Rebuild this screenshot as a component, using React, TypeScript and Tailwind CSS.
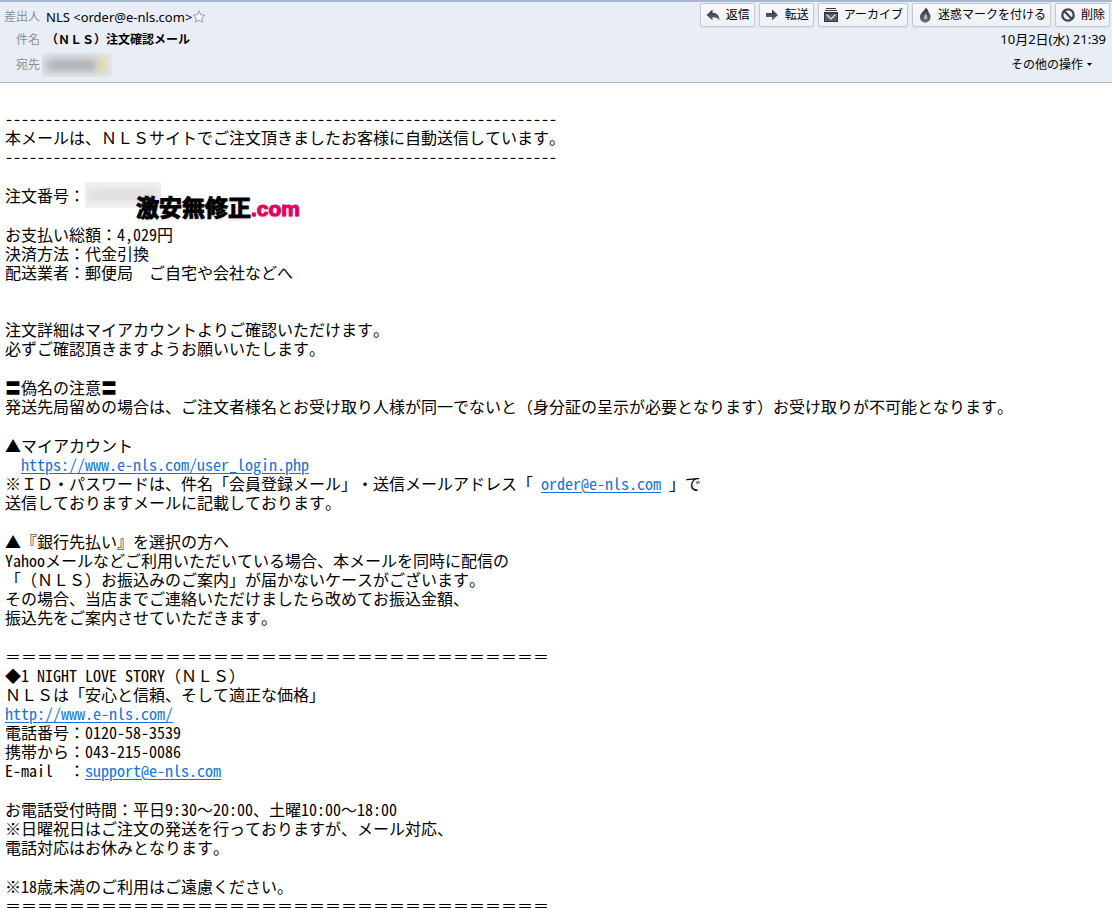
import React from "react";

const mailFont = "font-['Noto_Sans_Mono_CJK_JP','Noto_Sans_CJK_JP',monospace]";

const rule = "-".repeat(69);
const doubleRule = "＝".repeat(34);

interface ToolButtonProps {
  label: string;
  children: React.ReactNode;
}

function ToolButton({ label, children }: ToolButtonProps) {
  return (
    <button className="flex h-6 items-center gap-[5px] rounded-xs border border-[#c3cad4] bg-linear-to-b from-[#f8fafc] to-[#edf0f5] px-1 text-xs whitespace-nowrap shadow-xs">
      <svg viewBox="0 0 16 16" className="size-4 shrink-0" aria-hidden="true">
        <defs>
          <linearGradient id="ink" x1="0" y1="0" x2="0" y2="1">
            <stop offset="0" stopColor="#2f343a" />
            <stop offset="1" stopColor="#666c73" />
          </linearGradient>
        </defs>
        {children}
      </svg>
      {label}
    </button>
  );
}

function MailLink({ href, children }: { href: string; children: React.ReactNode }) {
  return (
    <a href={href} className="text-[#1373d9] underline underline-offset-2">
      {children}
    </a>
  );
}

function MailHeader() {
  return (
    <header className="flex justify-between border-t-2 border-b border-t-[#a9b7d1] border-b-[#a9b7d1] bg-[#e9edf5] pb-[3px] font-['Noto_Sans','Noto_Sans_CJK_JP',sans-serif] text-xs">
      <dl className="grid grid-cols-[36px_auto] content-start gap-x-[6px] pt-[3px] pl-1">
        <dt className="text-right leading-6 text-[#8b8f94]">差出人</dt>
        <dd className="flex items-center leading-6">
          <span className="text-[13px]">NLS &lt;order@e-nls.com&gt;</span>
          <svg viewBox="0 0 14 14" className="size-[14px]" fill="#f6f8fb" stroke="#9b9fa6" aria-hidden="true">
            <path d="M7 .8l1.700 4 4.300.4-3.300 2.800 1 4.300L7 10.100l-3.700 2.200 1-4.300L1 5.200l4.300-.4z" />
          </svg>
        </dd>
        <dt className="text-right leading-[22px] text-[#8b8f94]">件名</dt>
        <dd className="leading-[22px] font-bold">（ＮＬＳ）注文確認メール</dd>
        <dt className="text-right leading-7 text-[#8b8f94]">宛先</dt>
        <dd className="flex items-center">
          {/* Redacted recipient */}
          <span className="-ml-1 flex h-6 w-[70px] items-center overflow-hidden bg-[#e3e6eb] pl-1">
            <span className="h-3 w-[52px] bg-[#a9abae] blur-[5px]" />
            <span className="h-4 w-2 bg-[#e0d9a0] blur-[3px]" />
          </span>
        </dd>
      </dl>

      <div className="flex flex-col items-end pt-px pr-[2px]">
        <div className="flex gap-1">
          <ToolButton label="返信">
            <path d="M1.500 8l6-5.500v3.300c4.500.1 7 2.700 7 7.700-1.500-2.300-3.500-3.300-7-3.300v3.300z" fill="url(#ink)" />
          </ToolButton>
          <ToolButton label="転送">
            <path d="M2 6h6V2.500L14 8l-6 5.500V10H2z" fill="url(#ink)" />
          </ToolButton>
          <ToolButton label="アーカイブ">
            <path d="M3 1h10v1H3zM2 3h12v1H2zM1 5h14v10H1z" fill="#33383e" />
            <path d="M2 7h12v7H2z" fill="#5b6168" />
            <path d="M3.500 7.500L8 12l4.500-4.500" fill="none" stroke="#d9dde2" strokeWidth="1.300" />
          </ToolButton>
          <ToolButton label="迷惑マークを付ける">
            <path d="M8.500.5c.3 3-5.500 4.800-5.500 9.500 0 3.200 2.200 5.500 5.200 5.500S13.500 13.200 13.500 10c0-1.900-.7-3.300-1.700-4.500C11.400 3.300 10 1.600 8.500.5z" fill="url(#ink)" />
            <path d="M8.700 5.500c.3 2-2 3-2 5 0 1.200.8 2 1.800 2s1.900-.8 1.900-2.100c0-2-1.500-2.900-1.700-4.900z" fill="#aeb3b9" />
          </ToolButton>
          <ToolButton label="削除">
            <circle cx="8" cy="8" r="5.700" fill="none" stroke="#3f444a" strokeWidth="2.300" />
            <path d="M4 4l8 8" stroke="#3f444a" strokeWidth="2.300" />
          </ToolButton>
        </div>
        <time className="pr-1 text-[13px] leading-6">10月2日(水) 21:39</time>
        <button className="flex items-center gap-1 pr-[18px] leading-[27px]">
          その他の操作
          <svg viewBox="0 0 5 3" className="h-[3px] w-[5px]" aria-hidden="true">
            <path d="M0 0h5L2.500 3z" />
          </svg>
        </button>
      </div>
    </header>
  );
}

export default function App() {
  return (
    <div className="min-h-screen bg-white text-black [text-spacing-trim:space-all]">
      <MailHeader />
      <main className={`space-y-5 px-[5px] pt-[26px] pb-2 text-base leading-[19px] font-light whitespace-pre ${mailFont}`}>
        <p>
          {rule}
          <br />
          本メールは、ＮＬＳサイトでご注文頂きましたお客様に自動送信しています。
          <br />
          {rule}
        </p>
        <div className="relative flex">
          注文番号：
          {/* Redacted order number */}
          <span className="-my-1 flex h-[26px] w-[76px] items-center overflow-hidden bg-[#f3f3f3]">
            <span className="h-2 w-full bg-[#cfcfcf] blur-[6px]" />
          </span>
          <strong className="absolute top-2 left-[131px] text-[23px] leading-6 font-black text-shadow-md [-webkit-text-stroke:1px]">
            激安無修正
            <span className="font-['Liberation_Sans',sans-serif] text-[21px] text-[#e4005e]">.com</span>
          </strong>
        </div>
        <p>
          お支払い総額：4,029円
          <br />
          決済方法：代金引換
          <br />
          配送業者：郵便局　ご自宅や会社などへ
        </p>
        <p className="pt-[18px]">
          注文詳細はマイアカウントよりご確認いただけます。
          <br />
          必ずご確認頂きますようお願いいたします。
        </p>
        <p>
          〓偽名の注意〓
          <br />
          発送先局留めの場合は、ご注文者様名とお受け取り人様が同一でないと（身分証の呈示が必要となります）お受け取りが不可能となります。
        </p>
        <p>
          ▲マイアカウント
          <br />
          {"　"}
          <MailLink href="https://www.e-nls.com/user_login.php">https://www.e-nls.com/user_login.php</MailLink>
          <br />
          ※ＩＤ・パスワードは、件名「会員登録メール」・送信メールアドレス「{" "}
          <MailLink href="mailto:order@e-nls.com">order@e-nls.com</MailLink> 」で
          <br />
          送信しておりますメールに記載しております。
        </p>
        <p>
          ▲『銀行先払い』を選択の方へ
          <br />
          Yahooメールなどご利用いただいている場合、本メールを同時に配信の
          <br />
          「（ＮＬＳ）お振込みのご案内」が届かないケースがございます。
          <br />
          その場合、当店までご連絡いただけましたら改めてお振込金額、
          <br />
          振込先をご案内させていただきます。
        </p>
        <p>
          {doubleRule}
          <br />
          ◆1 NIGHT LOVE STORY（ＮＬＳ）
          <br />
          ＮＬＳは「安心と信頼、そして適正な価格」
          <br />
          <MailLink href="http://www.e-nls.com/">http://www.e-nls.com/</MailLink>
          <br />
          電話番号：0120-58-3539
          <br />
          携帯から：043-215-0086
          <br />
          {"E-mail  ："}
          <MailLink href="mailto:support@e-nls.com">support@e-nls.com</MailLink>
        </p>
        <p>
          お電話受付時間：平日9:30～20:00、土曜10:00～18:00
          <br />
          ※日曜祝日はご注文の発送を行っておりますが、メール対応、
          <br />
          電話対応はお休みとなります。
        </p>
        <p>
          ※18歳未満のご利用はご遠慮ください。
          <br />
          {doubleRule}
        </p>
      </main>
    </div>
  );
}
